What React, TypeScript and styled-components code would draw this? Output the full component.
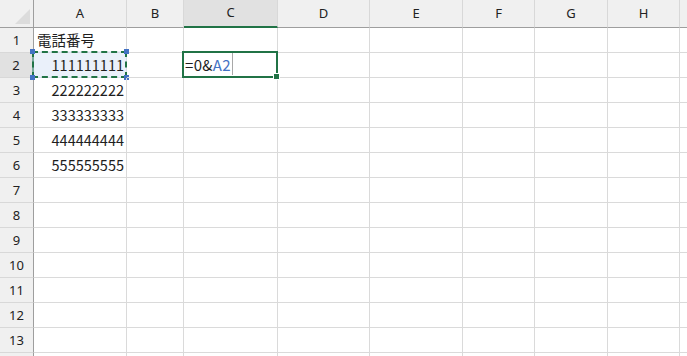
import React from "react";
import styled, { createGlobalStyle, css } from "styled-components";

const GlobalStyle = createGlobalStyle`
  html, body {
    margin: 0;
    padding: 0;
    background: #fff;
    overflow: hidden;
  }
  body {
    font-family: "Noto Sans CJK JP", "Noto Sans", sans-serif;
  }
`;

const colWidths = [34, 93, 57, 94, 92, 93, 72, 73, 72, 40];
const colNames = ["A", "B", "C", "D", "E", "F", "G", "H", "I"];
const ROWS = 14;
const VISIBLE_COLS = 8;
const VISIBLE_ROWS = 13;

const cells: Record<string, string> = {
  A1: "電話番号",
  A2: "111111111",
  A3: "222222222",
  A4: "333333333",
  A5: "444444444",
  A6: "555555555",
};

const Sheet = styled.div`
  display: grid;
  grid-template-columns: ${colWidths.map((w) => `${w}px`).join(" ")};
  grid-template-rows: 28px repeat(${ROWS}, 25px);
  width: 687px;
  height: 356px;
  overflow: hidden;
`;

const Corner = styled.div`
  position: relative;
  background: #f0f0f0;
  border-right: 1px solid #9e9e9e;
  border-bottom: 1px solid #9e9e9e;
  box-sizing: border-box;

  svg {
    position: absolute;
    right: 3px;
    bottom: 3px;
  }
`;

const ColHeader = styled.div<{ $active?: boolean }>`
  display: flex;
  align-items: center;
  justify-content: center;
  box-sizing: border-box;
  padding-bottom: 2px;
  background: ${(p) => (p.$active ? "#e1e1e1" : "#f0f0f0")};
  border-right: 1px solid #d8d8d8;
  border-bottom: ${(p) => (p.$active ? "2px solid #217346" : "1px solid #9e9e9e")};
  color: #222;
  font-family: "Noto Sans", sans-serif;
  font-size: 13px;
`;

const RowHeader = styled.div<{ $active?: boolean }>`
  display: flex;
  align-items: center;
  justify-content: center;
  box-sizing: border-box;
  background: ${(p) => (p.$active ? "#e1e1e1" : "#f0f0f0")};
  border-right: ${(p) => (p.$active ? "2px solid #217346" : "1px solid #9e9e9e")};
  border-bottom: 1px solid #d8d8d8;
  color: #222;
  font-family: "Noto Sans", sans-serif;
  font-size: 13px;
`;

const Cell = styled.div<{ $numeric?: boolean }>`
  position: relative;
  display: flex;
  align-items: center;
  justify-content: ${(p) => (p.$numeric ? "flex-end" : "flex-start")};
  box-sizing: border-box;
  padding: 0 2px 1px 3px;
  border-right: 1px solid #dadada;
  border-bottom: 1px solid #dadada;
  color: #1e1e1e;
  font-size: 14.5px;
  white-space: nowrap;
`;

const Marquee = styled.div`
  position: absolute;
  inset: -2px -1px -1px -2px;
  background: rgba(214, 225, 245, 0.5);
  border: 2px dashed #217346;
  pointer-events: none;
  z-index: 0;
`;

const Handle = styled.span<{ $x: "left" | "right"; $y: "top" | "bottom" }>`
  position: absolute;
  width: 5px;
  height: 5px;
  background: #4472c4;
  ${(p) => (p.$x === "left" ? css`left: -4px;` : css`right: -4px;`)}
  ${(p) => (p.$y === "top" ? css`top: -4px;` : css`bottom: -4px;`)}
`;

const CellText = styled.span`
  position: relative;
  z-index: 1;
`;

const Editor = styled.div`
  position: absolute;
  inset: -2px -1px -1px -2px;
  border: 2px solid #217346;
  display: flex;
  align-items: center;
  padding: 0 0 1px 1px;
  font-size: 15px;
  letter-spacing: 0.3px;
  color: #1e1e1e;
  z-index: 2;
`;

const Ref = styled.span`
  color: #4472c4;
`;

const Caret = styled.span`
  display: inline-block;
  width: 1px;
  align-self: stretch;
  background: #a8a8a8;
  margin-left: 1px;
`;

const FillHandle = styled.span`
  position: absolute;
  right: -4px;
  bottom: -4px;
  width: 5px;
  height: 5px;
  background: #217346;
  border: 1px solid #fff;
`;

export default function App() {
  const activeCol = "C";
  const activeRow = 2;

  return (
    <>
      <GlobalStyle />
      <Sheet>
        <Corner>
          <svg width="15" height="15" viewBox="0 0 15 15">
            <polygon points="15,0 15,15 0,15" fill="#dcdcdc" />
          </svg>
        </Corner>
        {colNames.map((c, i) => (
          <ColHeader key={c} $active={c === activeCol}>
            {i < VISIBLE_COLS ? c : ""}
          </ColHeader>
        ))}
        {Array.from({ length: ROWS }, (_, i) => i + 1).map((r) => (
          <React.Fragment key={r}>
            <RowHeader $active={r === activeRow}>
              {r <= VISIBLE_ROWS ? r : ""}
            </RowHeader>
            {colNames.map((c) => {
              const id = `${c}${r}`;
              const value = cells[id];
              const numeric = value !== undefined && /^\d+$/.test(value);
              return (
                <Cell key={id} $numeric={numeric}>
                  {id === "A2" && (
                    <Marquee>
                      <Handle $x="left" $y="top" />
                      <Handle $x="right" $y="top" />
                      <Handle $x="left" $y="bottom" />
                      <Handle $x="right" $y="bottom" />
                    </Marquee>
                  )}
                  {value && <CellText>{value}</CellText>}
                  {id === "C2" && (
                    <Editor>
                      =0&amp;<Ref>A2</Ref>
                      <Caret />
                      <FillHandle />
                    </Editor>
                  )}
                </Cell>
              );
            })}
          </React.Fragment>
        ))}
      </Sheet>
    </>
  );
}
